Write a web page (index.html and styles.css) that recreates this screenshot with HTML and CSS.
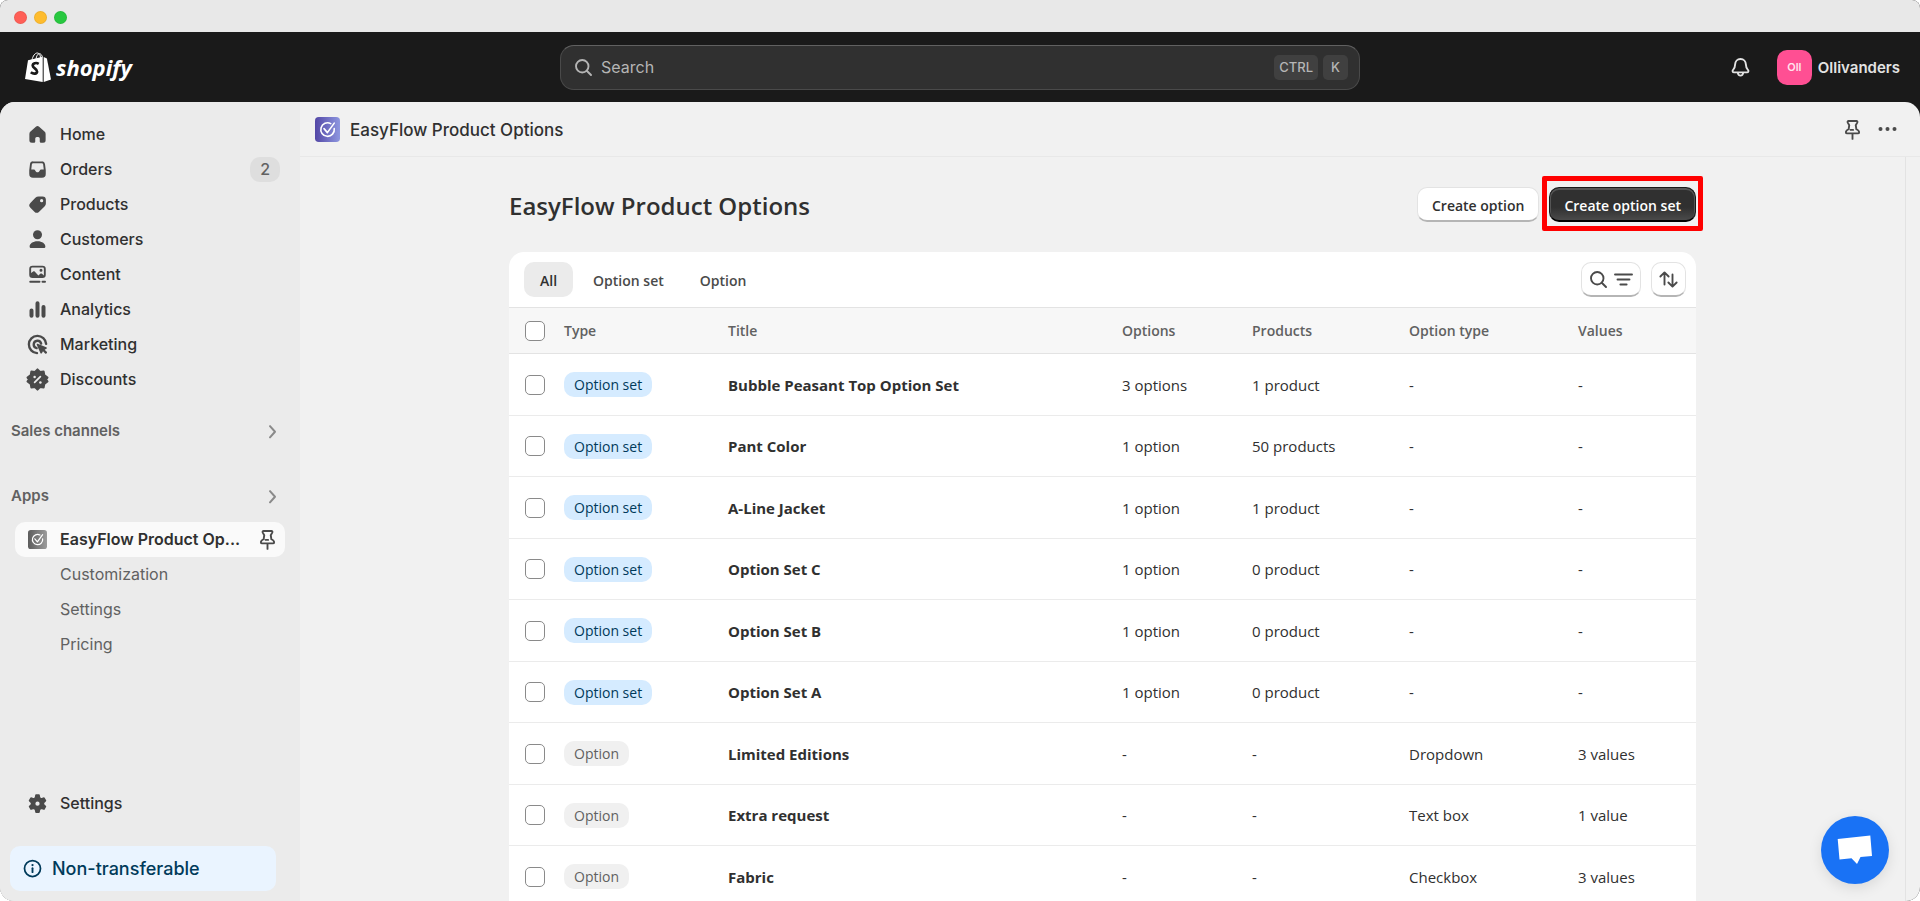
FILE: index.html
```html
<!DOCTYPE html>
<html lang="en">
<head>
<meta charset="utf-8">
<title>EasyFlow Product Options</title>
<link rel="stylesheet" href="styles.css">
</head>
<body>
<svg class="defs" aria-hidden="true">
  <defs>
    <linearGradient id="violet" x1="0" y1="0" x2="1" y2="0"><stop offset="0" stop-color="#5347a6"/><stop offset="1" stop-color="#8e97e0"/></linearGradient>
    <linearGradient id="gray" x1="0" y1="0" x2="1" y2="0"><stop offset="0" stop-color="#5c5c5c"/><stop offset="1" stop-color="#9c9c9c"/></linearGradient>
    <symbol id="pin" viewBox="0 0 20 20"><path d="M6.800 3.200h6.400c.6 0 .9.6.7 1.100L12.600 6.600l.5 3.200c1.200.5 2.200 1.200 2.200 2.300 0 .6-.4 1-1 1H5.700c-.6 0-1-.4-1-1 0-1.100 1-1.800 2.200-2.300l.5-3.200L6.100 4.300c-.2-.5.1-1.100.7-1.100ZM10 13.500v4M8.500 10.300h2" fill="none" stroke="currentColor" stroke-width="1.500" stroke-linecap="round" stroke-linejoin="round"/></symbol>
    <symbol id="chevron" viewBox="0 0 20 20"><path d="M8 6.500l4 4.500-4 4.500" fill="none" stroke="currentColor" stroke-width="1.600" stroke-linecap="round" stroke-linejoin="round"/></symbol>
    <symbol id="magnifier" viewBox="0 0 20 20"><circle cx="9" cy="9" r="5" fill="none" stroke="currentColor" stroke-width="1.500"/><path d="M12.800 12.800l3.200 3.200" stroke="currentColor" stroke-width="1.600" stroke-linecap="round"/></symbol>
    <symbol id="tick" viewBox="0 0 20 20"><path d="M12.600 5.300A5.400 5.400 0 1 0 15.400 9.300M7.200 9.300l2.700 3.200 5.500-7.600" fill="none" stroke="#fff" stroke-width="1.300" stroke-linecap="round" stroke-linejoin="round"/></symbol>
  </defs>
</svg>
<div class="window">
  <div class="titlebar"><span class="dot dot-red"></span><span class="dot dot-amber"></span><span class="dot dot-green"></span></div>

  <header class="topbar">
    <a class="brand" href="#" aria-label="Shopify">
      <svg class="bag" viewBox="0 0 26 30"><path fill="#fff" d="M3 8.200 17.700 4.700V30L0 27Z"/><path fill="#fff" d="M18.700 5l3.200 1.600L26 27.500 18.700 30Z"/><path d="M7 8C7.800 4 10 1 12.300 1c2.200 0 3.100 2.200 3.200 5M11 7c.4-3 1.800-5.300 3.400-5.300 1.500 0 2.600 1.400 3 3.600" fill="none" stroke="#fff" stroke-width="1"/><path d="M13.700 11.800c-2.500-1.500-6-.7-6 1.800 0 2.600 4.600 3 4.400 6-.2 2.400-3.600 2.800-6.300.7" fill="none" stroke="#1a1a1a" stroke-width="2.700"/></svg>
      <span class="wordmark">shopify</span>
    </a>
    <label class="search">
      <svg class="icon"><use href="#magnifier"/></svg>
      <input type="text" placeholder="Search" aria-label="Search">
      <kbd>CTRL</kbd><kbd>K</kbd>
    </label>
    <div class="account">
      <button class="bare bell" aria-label="Notifications"><svg class="icon" viewBox="0 0 20 20"><path d="M10 3.200c-2.600 0-4.200 1.900-4.300 4.300-.1 2.300-.3 3-1.500 4.200-1 1-.6 2.200.7 2.200h10.200c1.300 0 1.700-1.200.7-2.200-1.200-1.200-1.400-1.900-1.500-4.200-.1-2.400-1.700-4.300-4.300-4.300ZM7.800 14.200c.2 1.500 1 2.300 2.200 2.300s2-.8 2.200-2.300" fill="none" stroke="currentColor" stroke-width="1.500" stroke-linejoin="round"/></svg></button>
      <button class="bare store"><span class="avatar">Oll</span><span>Ollivanders</span></button>
    </div>
  </header>

  <div class="shell">
    <aside class="sidebar">
      <nav class="nav">
        <a class="item" href="#"><svg class="icon" viewBox="0 0 20 20"><path fill="currentColor" d="M8.700 3.700a2 2 0 0 1 2.600 0l4.300 3.800c.6.500.9 1.200.9 2v5a2 2 0 0 1-2 2h-1.700a1 1 0 0 1-1-1v-2.300a1.200 1.200 0 0 0-1.200-1.200h-1.200a1.200 1.200 0 0 0-1.200 1.200v2.300a1 1 0 0 1-1 1H5.500a2 2 0 0 1-2-2v-5c0-.8.3-1.500.9-2z"/></svg>Home</a>
        <a class="item" href="#"><svg class="icon" viewBox="0 0 20 20"><path fill="currentColor" fill-rule="evenodd" d="M6.500 3.500h7a2.500 2.500 0 0 1 2.500 2.100l.6 5v2.900a3 3 0 0 1-3 3H6.400a3 3 0 0 1-3-3v-2.900l.6-5a2.500 2.500 0 0 1 2.500-2.100Zm0 1.500c-.6 0-.9.300-1 .8L5 10h1.800c.8 0 1.100.4 1.500.9.500.8 1 1.200 1.700 1.200s1.200-.4 1.700-1.200c.4-.5.700-.9 1.500-.9H15l-.5-4.200c-.1-.5-.4-.8-1-.8Z"/></svg>Orders<span class="count">2</span></a>
        <a class="item" href="#"><svg class="icon" viewBox="0 0 20 20"><path fill="currentColor" fill-rule="evenodd" d="M10.900 3.500h3.100a2.700 2.700 0 0 1 2.700 2.700v2.700c0 1-.4 1.900-1.100 2.600l-4.300 4.200a2.700 2.700 0 0 1-3.800 0l-3.200-3.200a2.700 2.700 0 0 1 0-3.800L8.300 4.600a3.700 3.700 0 0 1 2.600-1.100ZM13.300 8.200a1.300 1.300 0 1 0 0-2.600 1.300 1.300 0 0 0 0 2.600Z"/></svg>Products</a>
        <a class="item" href="#"><svg class="icon" viewBox="0 0 20 20"><circle cx="10" cy="6.200" r="3.600" fill="currentColor"/><path fill="currentColor" d="M10 11.300c-3.800 0-6.300 2-6.300 4.300 0 .8.500 1.200 1.300 1.200h10c.8 0 1.300-.4 1.300-1.200 0-2.300-2.500-4.300-6.300-4.300Z"/></svg>Customers</a>
        <a class="item" href="#"><svg class="icon" viewBox="0 0 20 20"><path fill="currentColor" fill-rule="evenodd" d="M6 3h8a2.600 2.600 0 0 1 2.600 2.600v4.600a2.600 2.600 0 0 1-2.600 2.600H6a2.600 2.600 0 0 1-2.600-2.600V5.600A2.600 2.600 0 0 1 6 3Zm0 1.400c-.7 0-1.100.4-1.100 1.100v3.300l1.600-1.200c.5-.4 1-.3 1.400.1l2.800 3 1.500-1.300c.5-.4 1-.4 1.400 0l1.500 1.300V5.500c0-.7-.4-1.100-1.100-1.100ZM12.800 7.700a1.200 1.200 0 1 0 0-2.400 1.200 1.200 0 0 0 0 2.400Z"/><path d="M4.200 15.800h7.400M14 15.800h2" stroke="currentColor" stroke-width="1.600" stroke-linecap="round"/></svg>Content</a>
        <a class="item" href="#"><svg class="icon" viewBox="0 0 20 20"><path d="M5.200 10.800v4.200M10 5v10M14.800 8v7" stroke="currentColor" stroke-width="3.200" stroke-linecap="round"/></svg>Analytics</a>
        <a class="item" href="#"><svg class="icon" viewBox="0 0 20 20"><path d="M16.900 9.500A6.900 6.900 0 1 0 9.600 16.900M12.900 9.300a3 3 0 1 0-3.600 3.600" fill="none" stroke="currentColor" stroke-width="1.900" stroke-linecap="round"/><path fill="currentColor" d="M9.400 10.100c-.2-.5.200-.9.700-.7l6.900 2.700c.6.200.6.900.1 1.200l-1.400.8 1.700 1.700c.8.800-.5 2.100-1.300 1.300l-1.700-1.700-.9 1.500c-.3.500-1 .4-1.200-.1Z"/></svg>Marketing</a>
        <a class="item" href="#"><svg class="icon" viewBox="0 0 20 20"><path fill="currentColor" stroke="currentColor" stroke-width="1.600" stroke-linejoin="round" d="M10 1.900 12 4l2.900-.4.500 2.800 2.600 2-1 1.600 1 1.600-2.600 2-.5 2.800L12 16l-2 2.100L8 16l-2.900.4-.5-2.800-2.600-2L3 10 2 8.400l2.600-2 .5-2.800L8 4Z"/><path d="M7.700 12.300l4.600-4.600" stroke="#ebebeb" stroke-width="1.400" stroke-linecap="round"/><circle cx="7.700" cy="7.900" r="1" fill="#ebebeb"/><circle cx="12.300" cy="12.300" r="1" fill="#ebebeb"/></svg>Discounts</a>
      </nav>
      <button class="bare section">Sales channels<svg class="icon"><use href="#chevron"/></svg></button>
      <button class="bare section section-apps">Apps<svg class="icon"><use href="#chevron"/></svg></button>
      <nav class="nav apps">
        <a class="item active" href="#"><span class="slot"><svg class="app-icon small" viewBox="0 0 20 20"><rect width="20" height="20" rx="3" fill="url(#gray)"/><use href="#tick"/></svg></span><span class="name">EasyFlow Product Op...</span><svg class="icon"><use href="#pin"/></svg></a>
        <a class="item sub" href="#">Customization</a>
        <a class="item sub" href="#">Settings</a>
        <a class="item sub" href="#">Pricing</a>
      </nav>
      <nav class="nav foot">
        <a class="item" href="#"><svg class="icon" viewBox="0 0 20 20"><path fill="currentColor" stroke="currentColor" stroke-width="1.200" stroke-linejoin="round" d="M8.800 3.200h2.400l.5 2.300 1.300.8 2.200-.7 1.200 2.100-1.600 1.600v1.500l1.600 1.600-1.200 2.100-2.200-.7-1.300.8-.5 2.300H8.800l-.5-2.300-1.300-.8-2.200.7-1.200-2.100 1.600-1.600V9.300L3.600 7.700l1.200-2.100 2.200.7 1.300-.8Z"/><circle cx="10" cy="10.100" r="1.700" fill="#ebebeb"/></svg>Settings</a>
      </nav>
      <div class="notice"><svg class="icon" viewBox="0 0 20 20"><circle cx="10" cy="10" r="6.400" fill="none" stroke="currentColor" stroke-width="1.400"/><path d="M10 9.700v3.200" stroke="currentColor" stroke-width="1.500" stroke-linecap="round"/><circle cx="10" cy="7.200" r=".9" fill="currentColor"/></svg>Non-transferable</div>
    </aside>

    <main class="main">
      <div class="appbar">
        <svg class="app-icon" viewBox="0 0 20 20"><rect width="20" height="20" rx="3" fill="url(#violet)"/><use href="#tick"/></svg>
        <span class="app-name">EasyFlow Product Options</span>
        <button class="bare" aria-label="Pin app"><svg class="icon"><use href="#pin"/></svg></button>
        <button class="bare" aria-label="More actions"><svg class="icon" viewBox="0 0 20 20"><g fill="currentColor"><circle cx="4.400" cy="9.600" r="1.600"/><circle cx="10" cy="9.600" r="1.600"/><circle cx="15.600" cy="9.600" r="1.600"/></g></svg></button>
      </div>
      <div class="frame">
        <div class="page">
          <div class="page-head">
            <h1>EasyFlow Product Options</h1>
            <button class="btn">Create option</button>
            <button class="btn btn-primary">Create option set</button>
          </div>
          <section class="card">
            <div class="toolbar">
              <button class="tab tab-on">All</button>
              <button class="tab">Option set</button>
              <button class="tab">Option</button>
              <button class="btn tool tool-wide" aria-label="Search and filter"><svg class="icon"><use href="#magnifier"/></svg><svg class="icon" viewBox="0 0 20 20"><path d="M3.200 6h13.600M5.200 10h9.600M7.500 14h5" stroke="currentColor" stroke-width="1.500" stroke-linecap="round"/></svg></button>
              <button class="btn tool" aria-label="Sort"><svg class="icon" viewBox="0 0 20 20"><path d="M6.800 14V4.500M3.500 7.600l3.300-3.300 3.300 3.300M13.200 6v9.500M9.900 12.400l3.300 3.300 3.300-3.300" fill="none" stroke="currentColor" stroke-width="1.500" stroke-linecap="round" stroke-linejoin="round"/></svg></button>
            </div>
            <table>
              <colgroup><col class="c-check"><col class="c-type"><col><col class="c-options"><col class="c-products"><col class="c-kind"><col class="c-values"></colgroup>
              <thead><tr><th><input type="checkbox" aria-label="Select all"></th><th>Type</th><th>Title</th><th>Options</th><th>Products</th><th>Option type</th><th>Values</th></tr></thead>
              <tbody>
                <tr><td><input type="checkbox" aria-label="Select Bubble Peasant Top Option Set"></td><td><span class="badge info">Option set</span></td><td class="title">Bubble Peasant Top Option Set</td><td>3 options</td><td>1 product</td><td>-</td><td>-</td></tr>
                <tr><td><input type="checkbox" aria-label="Select Pant Color"></td><td><span class="badge info">Option set</span></td><td class="title">Pant Color</td><td>1 option</td><td>50 products</td><td>-</td><td>-</td></tr>
                <tr><td><input type="checkbox" aria-label="Select A-Line Jacket"></td><td><span class="badge info">Option set</span></td><td class="title">A-Line Jacket</td><td>1 option</td><td>1 product</td><td>-</td><td>-</td></tr>
                <tr><td><input type="checkbox" aria-label="Select Option Set C"></td><td><span class="badge info">Option set</span></td><td class="title">Option Set C</td><td>1 option</td><td>0 product</td><td>-</td><td>-</td></tr>
                <tr><td><input type="checkbox" aria-label="Select Option Set B"></td><td><span class="badge info">Option set</span></td><td class="title">Option Set B</td><td>1 option</td><td>0 product</td><td>-</td><td>-</td></tr>
                <tr><td><input type="checkbox" aria-label="Select Option Set A"></td><td><span class="badge info">Option set</span></td><td class="title">Option Set A</td><td>1 option</td><td>0 product</td><td>-</td><td>-</td></tr>
                <tr><td><input type="checkbox" aria-label="Select Limited Editions"></td><td><span class="badge">Option</span></td><td class="title">Limited Editions</td><td>-</td><td>-</td><td>Dropdown</td><td>3 values</td></tr>
                <tr><td><input type="checkbox" aria-label="Select Extra request"></td><td><span class="badge">Option</span></td><td class="title">Extra request</td><td>-</td><td>-</td><td>Text box</td><td>1 value</td></tr>
                <tr><td><input type="checkbox" aria-label="Select Fabric"></td><td><span class="badge">Option</span></td><td class="title">Fabric</td><td>-</td><td>-</td><td>Checkbox</td><td>3 values</td></tr>
              </tbody>
            </table>
          </section>
        </div>
      </div>
    </main>
  </div>
  <button class="chat" aria-label="Open chat"><svg viewBox="0 0 36 30"><path fill="#fff" d="M.7 4 33.300.5 35 21 23.500 22 20 29 14.500 23.200 2.500 24.500Z"/></svg></button>
</div>
</body>
</html>
```
FILE: styles.css
```css
* { box-sizing: border-box; }
body { margin: 0; background: #fff; color: #303030; font-family: Inter, "Liberation Sans", sans-serif; font-size: 16px; }
button, input { font: inherit; color: inherit; }
button { cursor: pointer; }
a { color: inherit; text-decoration: none; }
.defs { position: absolute; width: 0; height: 0; }
.icon { width: 25px; height: 25px; flex: none; display: block; }
.bare { border: 0; background: none; padding: 0; }

.window { height: 100vh; display: flex; flex-direction: column; overflow: hidden; border-radius: 8px 8px 14px 14px; background: #1a1a1a; }
.titlebar { flex: none; height: 32px; display: flex; align-items: center; gap: 7px; padding: 2px 14px 0; background: #e8e8e8; }
.dot { width: 13px; height: 13px; border-radius: 50%; border: 1px solid #0001; }
.dot-red { background: #ff5f57; }
.dot-amber { background: #febc2e; }
.dot-green { background: #28c840; }

.topbar { flex: none; height: 70px; display: grid; grid-template-columns: 1fr minmax(0, 800px) 1fr; align-items: center; padding: 0 20px; color: #e3e3e3; }
.brand { display: flex; align-items: center; gap: 5px; margin-left: 5px; color: #fff; }
.bag { width: 26px; height: 30px; }
.wordmark { font: italic 700 22px/30px "Open Sans", sans-serif; }
.search { height: 45px; display: flex; align-items: center; gap: 5px; padding: 0 11px 0 10px; background: #303030; border: 1px solid #4a4a4a; border-top-color: #616161; border-radius: 14px; color: #b5b5b5; }
.search input { flex: 1; min-width: 0; padding: 0; border: 0; outline: 0; background: none; }
.search input::placeholder { color: #b5b5b5; opacity: 1; }
.search kbd { height: 25px; padding: 0 5px; min-width: 25px; border-radius: 5px; background: #404040; text-align: center; font: 500 13px/25px Inter, sans-serif; }
.account { display: flex; align-items: center; justify-content: flex-end; gap: 24px; }
.store { display: flex; align-items: center; gap: 6px; font-size: 15px; font-weight: 600; }
.avatar { width: 35px; height: 35px; border-radius: 10px; background: #ff4f93; color: #ffe3ee; font-size: 11px; line-height: 35px; text-align: center; }

.shell { flex: 1; min-height: 0; display: flex; overflow: hidden; border-radius: 15px 15px 0 0; background: #f1f1f1; }
.sidebar { flex: none; width: 300px; display: flex; flex-direction: column; padding: 15px 15px 10px; background: #ebebeb; }
.nav { display: flex; flex-direction: column; }
.item { height: 35px; display: flex; align-items: center; gap: 10px; padding: 0 5px 1px 10px; border-radius: 10px; font-weight: 500; }
.item .icon { color: #4a4a4a; }
.count { margin-left: auto; height: 25px; padding: 0 10px; border-radius: 10px; background: #dedede; color: #616161; line-height: 25px; }
.section { display: flex; align-items: center; justify-content: space-between; height: 35px; margin: 16px 0 0 -4px; color: #616161; font-size: 15px; font-weight: 600; }
.section .icon { color: #8a8a8a; }
.section-apps { margin-top: 30px; }
.apps { margin-top: 9px; }
.active { background: #fafafa; font-weight: 600; }
.active .name { flex: 1; white-space: nowrap; }
.slot { width: 25px; flex: none; display: flex; justify-content: center; }
.app-icon { width: 25px; height: 25px; flex: none; }
.small { width: 19px; height: 19px; }
.sub { padding-left: 45px; color: #616161; font-weight: 400; }
.foot { margin-top: auto; }
.notice { height: 45px; margin: 25px 9px 0 -5px; padding: 0 10px; display: flex; align-items: center; gap: 7px; border-radius: 10px; background: #eaf4ff; color: #003a5a; font-size: 18px; font-weight: 500; }

.main { flex: 1; min-width: 0; display: flex; flex-direction: column; }
.appbar { flex: none; height: 55px; display: flex; align-items: center; gap: 10px; padding: 1px 20px 0 15px; border-bottom: 1px solid #e8e8e8; font-size: 17px; color: #4a4a4a; }
.app-name { flex: 1; color: #303030; font-weight: 500; }
.frame { flex: 1; min-height: 0; overflow: hidden; margin-right: 14px; border-right: 1px solid #e3e3e3; padding: 30px 20px 0; font-family: "Open Sans", "Noto Sans", sans-serif; font-size: 15px; }
.page { max-width: 1187px; margin: 0 auto; }
.page-head { display: flex; align-items: center; gap: 10px; height: 35px; }
h1 { flex: 1; margin: 0; padding-top: 2px; font-size: 24px; line-height: 30px; font-weight: 600; }
.btn { height: 35px; padding: 2px 14px 0; border: 1px solid #e3e3e3; border-bottom: 2px solid #b5b5b5; border-radius: 10px; background: #fff; font-size: 14px; font-weight: 600; white-space: nowrap; }
.btn-primary { position: relative; border: 1px solid #1a1a1a; border-bottom: 2px solid #000; background: linear-gradient(#303030 60%, #4a4a4a); color: #fff; box-shadow: inset 0 1px 0 1px #555; }
.btn-primary::after { content: ""; position: absolute; inset: -12px -8px -11px; border: 5px solid #f00; border-radius: 2px; pointer-events: none; }

.card { margin-top: 30px; border-radius: 15px 15px 0 0; overflow: hidden; background: #fff; }
.toolbar { display: flex; gap: 4px; height: 55px; align-items: center; padding: 0 10px 0 15px; }
.tab { height: 35px; padding: 2px 16px 0; border: 0; border-radius: 10px; background: none; color: #4a4a4a; font-size: 14px; font-weight: 600; }
.tab-on { background: #ebebeb; color: #303030; }
.tool { width: 35px; padding: 0; display: flex; align-items: center; justify-content: center; border-radius: 10px; color: #4a4a4a; }
.tool-wide { width: 60px; margin: 0 6px 0 auto; }
table { width: 100%; table-layout: fixed; border-collapse: separate; border-spacing: 0; }
.c-check { width: 55px; }
.c-type { width: 164px; }
.c-options { width: 130px; }
.c-products { width: 157px; }
.c-kind { width: 169px; }
.c-values { width: 118px; }
th { height: 47px; padding: 0; text-align: left; background: #f7f7f7; border: solid #e3e3e3; border-width: 1px 0; color: #616161; font-size: 14px; font-weight: 600; }
td { height: 62px; padding: 0; border-bottom: 1px solid #ebebeb; }
tr:nth-child(even) td { height: 61px; }
th:first-child, td:first-child { padding-left: 16px; }
.title { font-weight: 700; }
input[type="checkbox"] { appearance: none; display: block; width: 20px; height: 20px; margin: 0; border: 1px solid #8a8a8a; border-radius: 5px; background: #fff; }
.badge { display: inline-block; height: 25px; padding: 0 10px; border-radius: 10px; background: #f0f0f0; color: #616161; line-height: 26px; vertical-align: middle; font-size: 14px; }
.info { background: #d5ebff; color: #003a5a; }

.chat { position: fixed; right: 31px; bottom: 17px; width: 68px; height: 68px; padding: 0; border: 0; border-radius: 50%; background: #1972f5; display: flex; align-items: center; justify-content: center; box-shadow: 0 4px 14px #0000001a; }
.chat svg { width: 36px; height: 30px; }
```
